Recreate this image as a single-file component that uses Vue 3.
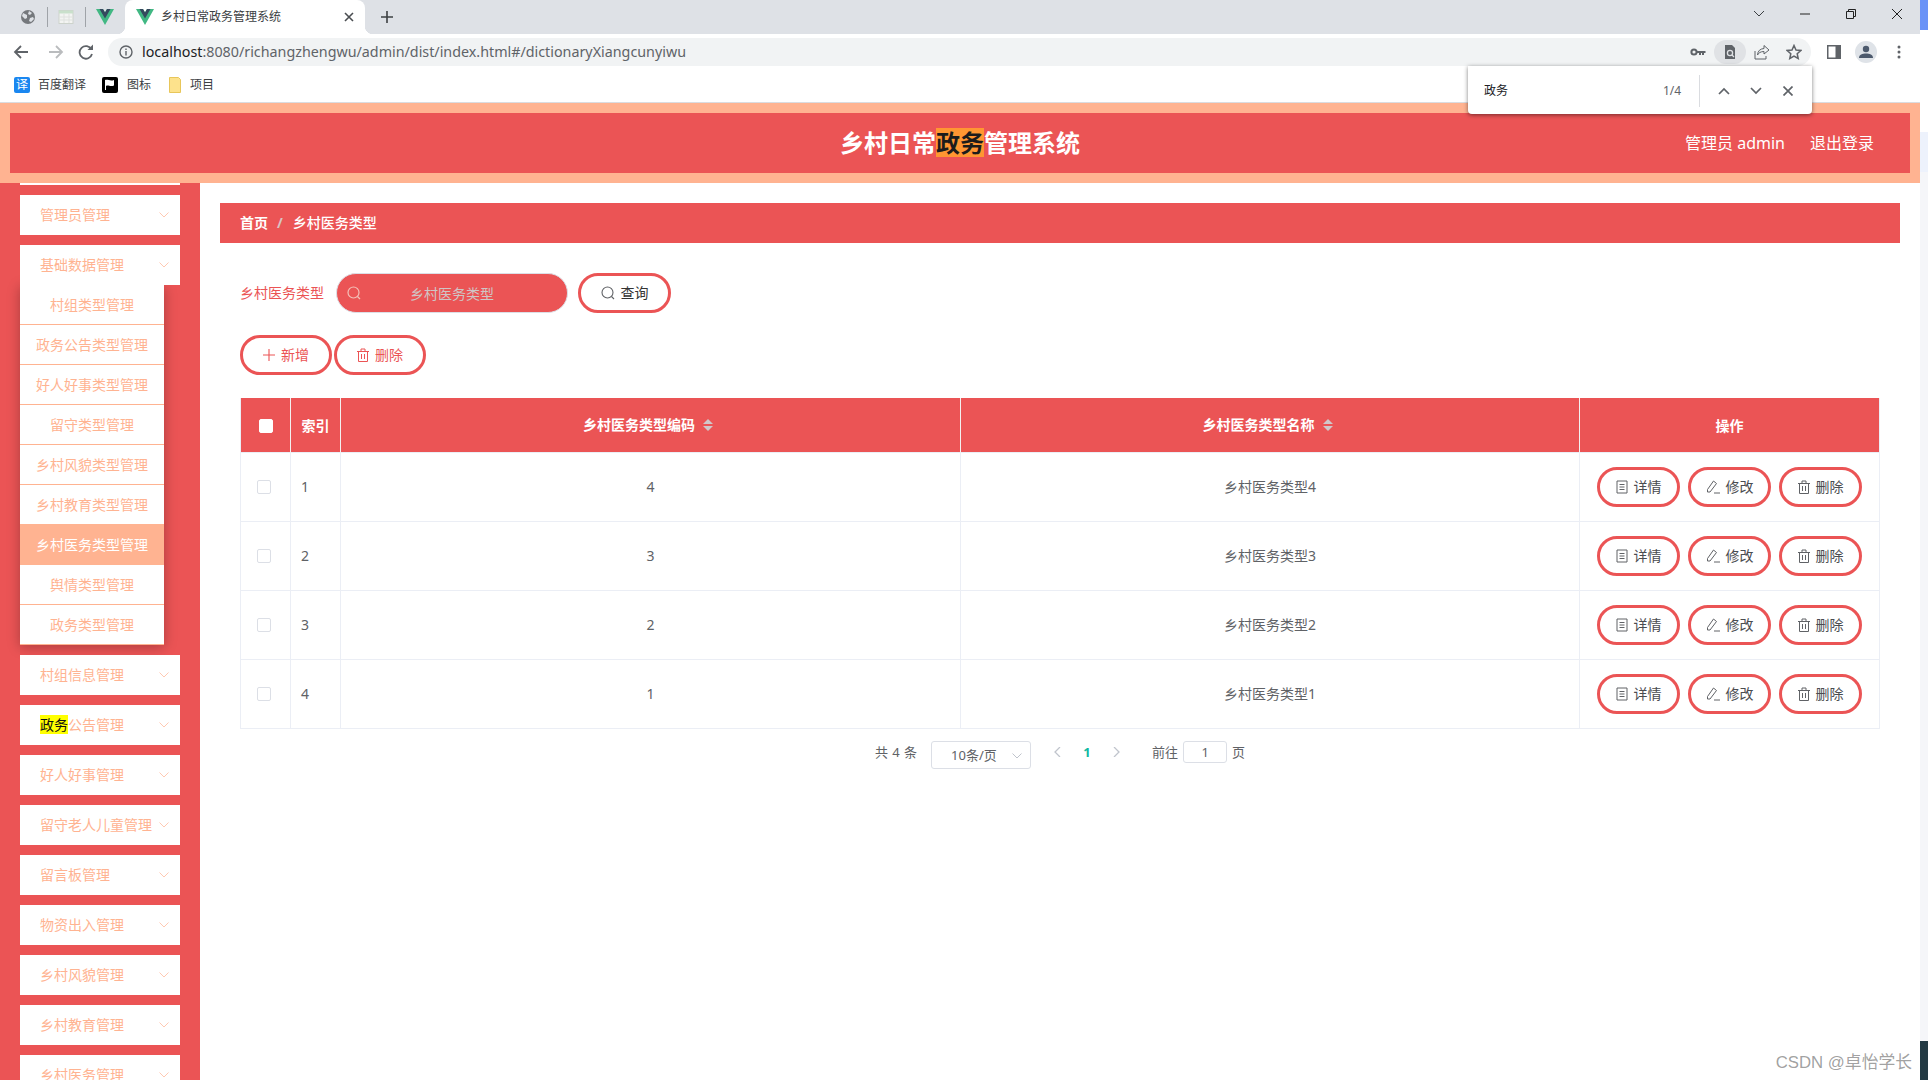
<script setup>
// 乡村医务类型 list page, inside the browser frame of the screenshot
const topMenus = ['村组信息管理', '政务公告管理', '好人好事管理', '留守老人儿童管理', '留言板管理', '物资出入管理', '乡村风貌管理', '乡村教育管理', '乡村医务管理'];

const subMenus = [
    { name: '村组类型管理' },
    { name: '政务公告类型管理' },
    { name: '好人好事类型管理' },
    { name: '留守类型管理' },
    { name: '乡村风貌类型管理' },
    { name: '乡村教育类型管理' },
    { name: '乡村医务类型管理', active: true },
    { name: '舆情类型管理' },
    { name: '政务类型管理' },
];

const rows = [
    { idx: 1, code: 4, name: '乡村医务类型4' },
    { idx: 2, code: 3, name: '乡村医务类型3' },
    { idx: 3, code: 2, name: '乡村医务类型2' },
    { idx: 4, code: 1, name: '乡村医务类型1' },
];
</script>

<template>
    <div class="window">
        <div class="browser">
            <div class="tabbar">
                <div class="pinned">
                    <svg class="pin-icon" width="16" height="16" viewBox="0 0 16 16"><circle cx="8" cy="8" r="7" fill="#75787c"/><path d="M3 4l4 2v3l-2 1-3-3zM9 2l3 2-2 2-2-1zM10 9l3-1 1 2-3 3-2-1z" fill="#dee1e6"/></svg>
                    <i class="tab-sep"></i>
                    <svg class="pin-icon" width="16" height="16" viewBox="0 0 16 16"><rect x="1" y="1.5" width="14" height="13" fill="#f3f4f2" stroke="#cdd3cc"/><rect x="1" y="1.5" width="14" height="3" fill="#c9e0cb"/><path d="M1 8h14M1 11h14M6 5v9M11 5v9" stroke="#dfe2df" fill="none"/></svg>
                    <i class="tab-sep"></i>
                    <svg class="pin-icon" width="18" height="16" viewBox="0 0 18 16"><path d="M0 0h7l2 3.500 2-3.500h7L9 16z" fill="#41b883"/><path d="M3.500 0H7l2 3.500L11 0h3.500L9 9.500z" fill="#35495e"/></svg>
                </div>
                <div class="tab-active">
                    <svg width="18" height="16" viewBox="0 0 18 16"><path d="M0 0h7l2 3.500 2-3.500h7L9 16z" fill="#41b883"/><path d="M3.500 0H7l2 3.500L11 0h3.500L9 9.500z" fill="#35495e"/></svg>
                    <span class="tab-title">乡村日常政务管理系统</span>
                    <svg class="tab-close" width="10" height="10" viewBox="0 0 10 10"><path d="M1 1l8 8M9 1l-8 8" stroke="#4a4d51" stroke-width="1.600"/></svg>
                </div>
                <svg class="tab-new" width="12" height="12" viewBox="0 0 12 12"><path d="M6 0v12M0 6h12" stroke="#3c4043" stroke-width="1.600"/></svg>
                <div class="win-ctrls">
                    <svg width="46" height="12" viewBox="0 0 46 12"><path d="M18 3l5 5 5-5" fill="none" stroke="#3c4043" stroke-width="1"/></svg>
                    <svg width="46" height="12" viewBox="0 0 46 12"><path d="M18 6h10" stroke="#222" stroke-width="1"/></svg>
                    <svg width="46" height="12" viewBox="0 0 46 12"><path d="M18.500 3.500h7v7h-7zM20.500 3.500v-2h7v7h-2" fill="none" stroke="#222" stroke-width="1"/></svg>
                    <svg width="46" height="12" viewBox="0 0 46 12"><path d="M18 1l10 10M28 1L18 11" stroke="#222" stroke-width="1"/></svg>
                </div>
            </div>

            <div class="toolbar">
                <svg class="nav nav-back" width="16" height="16" viewBox="0 0 16 16"><path d="M15 8H2M8 2L2 8l6 6" fill="none" stroke="#5f6368" stroke-width="1.800"/></svg>
                <svg class="nav nav-fwd" width="16" height="16" viewBox="0 0 16 16"><path d="M1 8h13M8 2l6 6-6 6" fill="none" stroke="#babcbe" stroke-width="1.800"/></svg>
                <svg class="nav nav-reload" width="16" height="16" viewBox="0 0 16 16"><path d="M13.500 5.500A6.300 6.300 0 1 0 14 10" fill="none" stroke="#5f6368" stroke-width="1.800"/><path d="M9.500 6H15V.5z" fill="#5f6368"/></svg>
                <div class="omnibox">
                    <svg width="14" height="14" viewBox="0 0 14 14"><circle cx="7" cy="7" r="6" fill="none" stroke="#5f6368" stroke-width="1.400"/><path d="M7 6v4.500M7 3.500v1.500" stroke="#5f6368" stroke-width="1.400"/></svg>
                    <span class="url"><b>localhost</b>:8080/richangzhengwu/admin/dist/index.html#/dictionaryXiangcunyiwu</span>
                    <div class="omni-icons">
                        <span class="omni-btn"><svg width="16" height="16" viewBox="0 0 16 16"><circle cx="4" cy="8" r="2.600" fill="none" stroke="#5f6368" stroke-width="2"/><path d="M7 7h8.500v2H14v2h-2V9h-1v2H9V9H7z" fill="#5f6368"/></svg></span>
                        <span class="omni-btn omni-on"><svg width="16" height="16" viewBox="0 0 16 16"><path d="M3 1h7l3 3v11H3z" fill="#5f6368"/><circle cx="8" cy="9" r="2.600" fill="none" stroke="#e0e2e5" stroke-width="1.300"/><path d="M10 11l2 2" stroke="#e0e2e5" stroke-width="1.300"/></svg></span>
                        <span class="omni-btn"><svg width="16" height="16" viewBox="0 0 16 16"><path d="M10 1.500L15 6l-5 4V7.500C6.500 7.500 4.500 9 3.500 11 3.800 7 6 4.800 10 4.500zM1 7v8h11v-3" fill="none" stroke="#5f6368" stroke-width="1"/></svg></span>
                        <span class="omni-btn"><svg width="16" height="16" viewBox="0 0 16 16"><path d="M8 1.500l2 4.500 4.800.5-3.600 3.200 1 4.800L8 12l-4.200 2.500 1-4.800L1.200 6.500 6 6z" fill="none" stroke="#5f6368" stroke-width="1.500"/></svg></span>
                    </div>
                </div>
                <div class="tool-right">
                    <svg class="panel-icon" width="14" height="14" viewBox="0 0 14 14"><path d="M0 0h14v14H0z" fill="#5f6368"/><path d="M1.500 1.500h7v11h-7z" fill="#fff"/></svg>
                    <span class="avatar"><svg width="14" height="14" viewBox="0 0 14 14"><circle cx="7" cy="4" r="3.200" fill="#4d5a6d"/><path d="M0 13c0-3.500 3.500-4.500 7-4.500s7 1 7 4.500z" fill="#4d5a6d"/></svg></span>
                    <svg class="dots" width="4" height="14" viewBox="0 0 4 14"><circle cx="2" cy="2" r="1.500" fill="#5f6368"/><circle cx="2" cy="7" r="1.500" fill="#5f6368"/><circle cx="2" cy="12" r="1.500" fill="#5f6368"/></svg>
                </div>
            </div>

            <div class="bookmarks">
                <span class="bm-icon bm-fanyi">译</span>
                <span class="bm-text">百度翻译</span>
                <svg class="bm-flag" width="16" height="16" viewBox="0 0 16 16"><rect width="16" height="16" rx="2" fill="#000"/><path d="M3 3v10h1V9c2-1.500 4 1 8-.5V3C8 4.500 6 2 3 3z" fill="#fff"/></svg>
                <span class="bm-text bm-text-sm">图标</span>
                <svg class="bm-folder" width="12" height="16" viewBox="0 0 12 16"><path d="M.5.5h9l2 2v13H.5z" fill="#fde28c" stroke="#e8c65a"/></svg>
                <span class="bm-text bm-text-sm">项目</span>
            </div>

            <header class="site-head">
                <div class="head-inner">
                    <span></span>
                    <h1 class="site-title">乡村日常<mark class="find-cur">政务</mark>管理系统</h1>
                    <div class="head-user">
                        <span>管理员 admin</span>
                        <span>退出登录</span>
                    </div>
                </div>
            </header>

            <div class="site-body">
                <aside class="sidebar">
                    <div class="menu-cut"></div>
                    <div class="menu-item">
                        <span>管理员管理</span>
                        <svg class="chev" width="10" height="6" viewBox="0 0 10 6"><path d="M.5.5L5 5 9.500.5" fill="none" stroke="#ffc9b2"/></svg>
                    </div>
                    <div class="menu-item menu-open">
                        <span>基础数据管理</span>
                        <svg class="chev" width="10" height="6" viewBox="0 0 10 6"><path d="M.5.5L5 5 9.500.5" fill="none" stroke="#ffc9b2"/></svg>
                    </div>
                    <ul class="submenu">
                        <li v-for="s in subMenus" :key="s.name" :class="{ on: s.active }">{{ s.name }}</li>
                    </ul>
                    <div v-for="m in topMenus" :key="m" class="menu-item">
                        <span v-if="m === '政务公告管理'"><mark class="find-hit">政务</mark>公告管理</span>
                        <span v-else>{{ m }}</span>
                        <svg class="chev" width="10" height="6" viewBox="0 0 10 6"><path d="M.5.5L5 5 9.500.5" fill="none" stroke="#ffc9b2"/></svg>
                    </div>
                </aside>

                <main class="main">
                    <div class="crumb">
                        <span class="crumb-home">首页</span>
                        <span class="crumb-sep">/</span>
                        <span>乡村医务类型</span>
                    </div>

                    <div class="content">
                        <div class="search-row">
                            <label class="search-label">乡村医务类型</label>
                            <div class="search-box">
                                <svg class="search-ic" width="14" height="14" viewBox="0 0 14 14"><circle cx="6.500" cy="6.500" r="5.500" fill="none" stroke="#f3c0b8" stroke-width="1.200"/><path d="M10.500 10.500L13 13" stroke="#f3c0b8" stroke-width="1.200"/></svg>
                                <input class="search-input" placeholder="乡村医务类型" />
                            </div>
                            <button class="pill pill-query">
                                <svg width="14" height="14" viewBox="0 0 14 14"><circle cx="6.500" cy="6.500" r="5.500" fill="none" stroke="#606266" stroke-width="1.100"/><path d="M10.500 10.500L13 13" stroke="#606266" stroke-width="1.100"/></svg>
                                查询
                            </button>
                        </div>

                        <div class="action-row">
                            <button class="pill pill-red">
                                <svg width="12" height="12" viewBox="0 0 12 12"><path d="M6 0v12M0 6h12" stroke="#eb5455" stroke-width="1.100"/></svg>
                                新增
                            </button>
                            <button class="pill pill-red">
                                <svg width="12" height="14" viewBox="0 0 12 14"><path d="M1.500 3.500h9v10h-9zM0 3.500h12M4 3.500V1h4v2.500M4.500 6v5M7.500 6v5" fill="none" stroke="#eb5455"/></svg>
                                删除
                            </button>
                        </div>

                        <table class="grid">
                            <colgroup>
                                <col class="c-check" />
                                <col class="c-index" />
                                <col class="c-wide" />
                                <col class="c-wide2" />
                                <col class="c-ops" />
                            </colgroup>
                            <thead>
                                <tr>
                                    <th><span class="check check-head"></span></th>
                                    <th>索引</th>
                                    <th class="th-sort">乡村医务类型编码<span class="caret"></span></th>
                                    <th class="th-sort">乡村医务类型名称<span class="caret"></span></th>
                                    <th>操作</th>
                                </tr>
                            </thead>
                            <tbody>
                                <tr v-for="row in rows" :key="row.idx">
                                    <td class="td-check"><span class="check"></span></td>
                                    <td class="td-index">{{ row.idx }}</td>
                                    <td>{{ row.code }}</td>
                                    <td>{{ row.name }}</td>
                                    <td>
                                        <div class="ops">
                                            <button class="pill pill-op">
                                                <svg width="12" height="14" viewBox="0 0 12 14"><path d="M1 1h10v12H1zM3.500 4.500h5M3.500 7h5M3.500 9.500h5" fill="none" stroke="#606266"/></svg>
                                                详情
                                            </button>
                                            <button class="pill pill-op">
                                                <svg width="14" height="14" viewBox="0 0 14 14"><path d="M7.500 1l3 2.500L4 12H1.500V9.500zM8 13h6" fill="none" stroke="#606266"/></svg>
                                                修改
                                            </button>
                                            <button class="pill pill-op">
                                                <svg width="12" height="14" viewBox="0 0 12 14"><path d="M1.500 3.500h9v10h-9zM0 3.500h12M4 3.500V1h4v2.500M4.500 6v5M7.500 6v5" fill="none" stroke="#606266"/></svg>
                                                删除
                                            </button>
                                        </div>
                                    </td>
                                </tr>
                            </tbody>
                        </table>

                        <div class="pager">
                            <span class="pg-text pg-total">共 4 条</span>
                            <div class="pg-size">
                                10条/页
                                <svg class="pg-size-ic" width="10" height="6" viewBox="0 0 10 6"><path d="M.5.5L5 5 9.500.5" fill="none" stroke="#c0c4cc"/></svg>
                            </div>
                            <svg class="pg-btn pg-prev" width="26" height="10" viewBox="0 0 26 10"><path d="M15 0l-5 5 5 5" fill="none" stroke="#c0c4cc" stroke-width="1.300"/></svg>
                            <span class="pg-num">1</span>
                            <svg class="pg-btn" width="26" height="10" viewBox="0 0 26 10"><path d="M11 0l5 5-5 5" fill="none" stroke="#c0c4cc" stroke-width="1.300"/></svg>
                            <span class="pg-text pg-goto">前往</span>
                            <span class="pg-input">1</span>
                            <span class="pg-text">页</span>
                        </div>
                    </div>
                </main>
            </div>
        </div>

        <div class="strip">
            <i class="s-blue"></i>
            <i class="s-white"></i>
            <i class="s-light"></i>
            <i class="s-grey"></i>
            <i class="s-dark"></i>
        </div>

        <!-- chrome find bar -->
        <div class="findbar">
            <span class="find-query">政务</span>
            <span class="find-count">1/4</span>
            <i class="find-sep"></i>
            <svg width="12" height="8" viewBox="0 0 12 8"><path d="M1 7l5-5 5 5" fill="none" stroke="#5f6368" stroke-width="1.700"/></svg>
            <svg width="12" height="8" viewBox="0 0 12 8"><path d="M1 1l5 5 5-5" fill="none" stroke="#5f6368" stroke-width="1.700"/></svg>
            <svg class="find-x" width="10" height="10" viewBox="0 0 10 10"><path d="M.5.5l9 9M9.500.5l-9 9" stroke="#5f6368" stroke-width="1.700"/></svg>
        </div>

        <div class="watermark">CSDN @卓怡学长</div>
    </div>
</template>

<style>
html, body { margin: 0; background: #fff; }
</style>

<style scoped>
.window {
    position: relative;
    display: flex;
    width: 1928px;
    height: 1080px;
    overflow: hidden;
    font-family: "Noto Sans", "Noto Sans CJK SC", sans-serif;
    font-size: 14px;
    color: #606266;
}
.browser { width: 1920px; height: 1080px; display: flex; flex-direction: column; overflow: hidden; }

/* tab strip */
.tabbar { flex: none; height: 34px; background: #dee1e6; display: flex; align-items: center; }
.pinned { display: flex; align-items: center; width: 125px; flex: none; padding-left: 20px; box-sizing: border-box; }
.pin-icon { flex: none; }
.tab-sep { width: 1px; height: 20px; background: #9fa3a8; margin: 0 10px 0 11px; }
.tab-active {
    position: relative; flex: none; width: 240px; height: 34px; box-sizing: border-box;
    background: #fff; border-radius: 8px 8px 0 0;
    display: flex; align-items: center; padding-left: 11px;
}
.tab-active::before, .tab-active::after {
    content: ""; position: absolute; bottom: 0; width: 8px; height: 8px;
}
.tab-active::before { left: -8px; background: radial-gradient(circle at 0 0, #dee1e6 8px, #fff 8.5px); }
.tab-active::after { right: -8px; background: radial-gradient(circle at 100% 0, #dee1e6 8px, #fff 8.5px); }
.tab-title { margin-left: 7px; font-size: 12px; color: #3c4043; line-height: 16px; width: 184px; }
.tab-close { flex: none; margin-left: -1px; }
.tab-new { margin-left: 16px; }
.win-ctrls { margin-left: auto; display: flex; margin-top: -6px; }

/* toolbar */
.toolbar { flex: none; height: 36px; background: #fff; display: flex; align-items: center; }
.nav { flex: none; }
.nav-back { margin-left: 13px; }
.nav-fwd { margin-left: 19px; }
.nav-reload { margin-left: 14px; }
.omnibox {
    flex: 1; height: 28px; margin: 4px 0 0 14px; align-self: flex-start; background: #f1f3f4; border-radius: 14px;
    display: flex; align-items: center; padding-left: 11px;
}
.url { margin-left: 9px; font-size: 14.3px; line-height: 20px; color: #5f6368; white-space: nowrap; }
.url b { font-weight: 400; color: #202124; }
.omni-icons { margin-left: auto; display: flex; padding-right: 1px; }
.omni-btn { width: 32px; height: 24px; display: flex; align-items: center; justify-content: center; border-radius: 12px; }
.omni-on { background: #e0e2e5; }
.tool-right { flex: none; width: 109px; display: flex; align-items: center; }
.panel-icon { margin-left: 16px; }
.avatar {
    width: 22px; height: 22px; border-radius: 50%; background: #dfe3e8; margin-left: 14px;
    display: flex; align-items: center; justify-content: center;
}
.dots { margin-left: 20px; }

/* bookmarks */
.bookmarks {
    flex: none; height: 33px; box-sizing: border-box; padding: 0 0 3px 14px; background: #fff; border-bottom: 1px solid #dadce0;
    display: flex; align-items: center;
}
.bm-icon {
    width: 16px; height: 16px; border-radius: 2px; background: #1a87f0; color: #fff;
    font-size: 12px; line-height: 16px; text-align: center;
}
.bm-text { font-size: 12px; line-height: 16px; color: #3c4043; margin-left: 8px; }
.bm-text-sm { margin-left: 9px; }
.bm-flag { margin-left: 16px; }
.bm-folder { margin-left: 18px; }

/* site header */
.site-head { flex: none; height: 80px; box-sizing: border-box; background: #ffb391; padding: 10px; }
.head-inner {
    height: 60px; background: #eb5455; display: grid; grid-template-columns: 1fr auto 1fr;
    align-items: center; color: #fff;
}
.site-title { margin: 0; font-size: 24px; line-height: 30px; font-weight: 700; color: #fff; }
.find-cur { display: inline-block; line-height: 29px; background: #ff9632; color: #1c1c1c; }
.head-user { display: flex; justify-content: flex-end; gap: 25px; padding-right: 36px; font-size: 16px; line-height: 22px; }

.site-body { flex: 1; display: flex; min-height: 0; }

/* sidebar */
.sidebar { flex: none; width: 200px; box-sizing: border-box; padding: 0 20px; background: #eb5455; overflow: hidden; }
.menu-cut { height: 2px; background: #fff; margin-bottom: 10px; }
.menu-item {
    position: relative; height: 40px; margin-bottom: 10px; background: #fff;
    padding-left: 20px; color: #ffb391; line-height: 40px; white-space: nowrap;
}
.menu-open { margin-bottom: 0; }
.find-hit { display: inline-block; line-height: 19px; background: #ff0; color: #111; }
.chev { position: absolute; right: 11px; top: 17px; }
.submenu { list-style: none; margin: 0 0 10px; padding: 0; width: 144px; background: #fff; box-shadow: 0 2px 12px rgba(0, 0, 0, .28); }
.submenu li {
    height: 40px; box-sizing: border-box; border-bottom: 1px solid #ffb391;
    text-align: center; line-height: 39px; color: #ffb391;
}
.submenu li.on { background: #ffb391; color: #fff; }

/* main */
.main { flex: 1; min-width: 0; padding: 20px 20px 0; }
.crumb {
    height: 40px; background: #eb5455; color: #fff; padding-left: 20px;
    display: flex; align-items: center; line-height: 20px; font-weight: 500;
}
.crumb-home { font-weight: 700; }
.crumb-sep { color: #d9c3c3; margin: 0 10px 0 9px; font-weight: 700; }
.content { padding: 30px 20px 0; }

.search-row { display: flex; align-items: center; height: 40px; }
.search-label { color: #eb5455; line-height: 20px; width: 96px; white-space: nowrap; }
.search-box { position: relative; width: 232px; height: 40px; }
.search-ic { position: absolute; left: 11px; top: 13px; }
.search-input {
    display: block; width: 100%; height: 100%; box-sizing: border-box; padding: 0 30px;
    background: #eb5455; border: 1px solid #dcdfe6; border-radius: 20px; outline: none;
    font: inherit; color: #fff; text-align: center;
}
.search-input::placeholder { color: #cfc5c5; opacity: 1; }

.pill {
    box-sizing: border-box; height: 40px; background: #fff; border: 3px solid #eb5455; border-radius: 20px;
    display: flex; align-items: center; justify-content: center; gap: 6px; padding: 0;
    font: inherit; line-height: 20px; cursor: pointer;
}
.pill-query { width: 93px; margin-left: 10px; color: #333; }
.pill-red { width: 92px; color: #eb5455; }
.action-row { display: flex; gap: 2px; margin-top: 22px; }

/* table */
.grid { width: 1639px; margin-top: 23px; border-collapse: collapse; table-layout: fixed; background: #fff; }
.c-check, .c-index { width: 50px; }
.c-wide { width: 620px; }
.c-wide2 { width: 619px; }
.c-ops { width: 300px; }
.grid th {
    height: 54px; box-sizing: border-box; padding: 3px 0 0; background: #eb5455; color: #fff; font-weight: 700; line-height: 20px;
    border: 1px solid #f3f0f0; border-width: 0 1px; text-align: center;
}
.grid th:first-child { border-left-color: #ebeef5; }
.grid th:last-child { border-right-color: #ebeef5; }
.grid .th-sort { padding: 0; }
.grid td { height: 69px; padding: 0; border: 1px solid #ebeef5; text-align: center; line-height: 20px; box-sizing: border-box; }
.grid .td-index { text-align: left; padding-left: 10px; }
.grid .td-check { text-align: left; padding-left: 16px; }
.check { display: block; box-sizing: border-box; width: 14px; height: 14px; border: 1px solid #dcdfe6; border-radius: 2px; background: #fff; }
.check-head { border-color: #fff; margin-left: 18px; }
.caret { display: inline-block; position: relative; width: 10px; height: 14px; margin: 0 5px 0 8px; vertical-align: -2px; }
.caret::before, .caret::after {
    content: ""; position: absolute; left: 0; border: 5px solid transparent;
}
.caret::before { top: -4px; border-bottom-color: #d0c8ca; }
.caret::after { bottom: -4px; border-top-color: #d0c8ca; }

.ops { display: flex; justify-content: center; gap: 8px; }
.pill-op { width: 83px; color: #4a4c50; }

/* pagination */
.pager { display: flex; align-items: flex-start; justify-content: center; margin-top: 12px; font-size: 13px; }
.pg-text { line-height: 22px; }
.pg-total { word-spacing: 1px; }
.pg-goto { margin-left: 23px; }
.pg-size {
    position: relative; box-sizing: border-box; width: 100px; height: 28px; margin-left: 14px;
    border: 1px solid #dcdfe6; border-radius: 3px; line-height: 26px; padding-left: 19px;
}
.pg-size-ic { position: absolute; right: 8px; top: 11px; }
.pg-btn { margin-top: 6px; }
.pg-prev { margin-left: 14px; }
.pg-num { width: 32px; text-align: center; line-height: 22px; font-weight: 700; color: #12b8a0; }
.pg-input {
    box-sizing: border-box; width: 44px; height: 22px; margin: 0 5px; border: 1px solid #dcdfe6;
    border-radius: 3px; text-align: center; line-height: 20px;
}

/* window edge */
.strip { flex: none; width: 8px; height: 1080px; display: flex; flex-direction: column; }
.s-blue { height: 30px; background: #6a93f7; }
.s-white { height: 102px; background: #fff; }
.s-light { height: 40px; background: #edf2fc; }
.s-grey { flex: 1; background: #f5f6f9; }
.s-dark { height: 39px; background: #233a44; }

/* overlays */
.findbar {
    position: absolute; left: 1468px; top: 66px; width: 344px; height: 48px; box-sizing: border-box;
    background: #fff; border-radius: 0 0 4px 4px; box-shadow: 0 1px 4px rgba(0, 0, 0, .5);
    display: flex; align-items: center; padding: 1px 0 0 16px;
}
.find-query { width: 179px; font-size: 12px; line-height: 16px; color: #202124; }
.find-count { width: 36px; font-size: 12px; line-height: 16px; color: #5f6368; }
.find-sep { width: 1px; height: 32px; background: #dadce0; margin-right: 18px; }
.findbar svg { margin-right: 20px; }
.findbar .find-x { margin: 0 0 0 1px; }
.watermark {
    position: absolute; right: 16px; bottom: 6px; font-family: "Liberation Sans", "Noto Sans CJK SC", sans-serif;
    font-size: 16.8px; line-height: 22px; color: rgba(80, 80, 80, .55); white-space: nowrap;
}
</style>
